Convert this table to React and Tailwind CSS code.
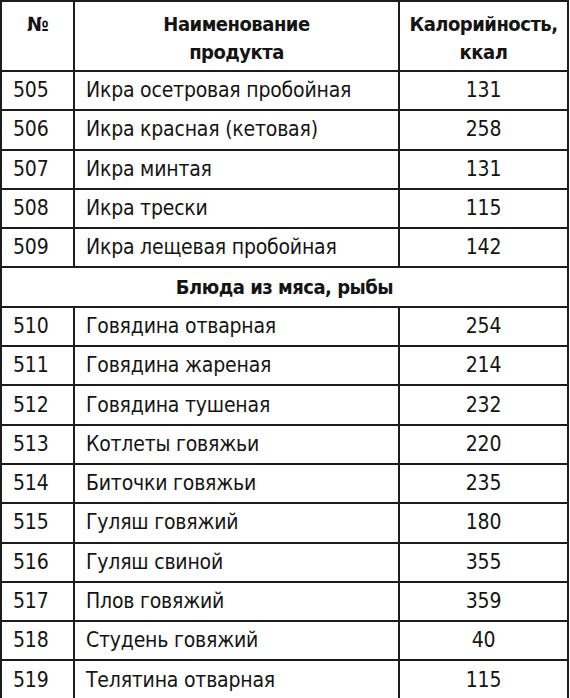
import React from "react";

const rowsTop = [
  ["505", "Икра осетровая пробойная", "131"],
  ["506", "Икра красная (кетовая)", "258"],
  ["507", "Икра минтая", "131"],
  ["508", "Икра трески", "115"],
  ["509", "Икра лещевая пробойная", "142"],
];

const rowsMeat = [
  ["510", "Говядина отварная", "254"],
  ["511", "Говядина жареная", "214"],
  ["512", "Говядина тушеная", "232"],
  ["513", "Котлеты говяжьи", "220"],
  ["514", "Биточки говяжьи", "235"],
  ["515", "Гуляш говяжий", "180"],
  ["516", "Гуляш свиной", "355"],
  ["517", "Плов говяжий", "359"],
  ["518", "Студень говяжий", "40"],
  ["519", "Телятина отварная", "115"],
];

const Row = ({ num, name, kcal }) => (
  <tr className="h-[39.3px]">
    <td className="border-2 border-[#1c1c1c] pl-[11px] align-middle">{num}</td>
    <td className="border-2 border-[#1c1c1c] pl-[11px] align-middle">{name}</td>
    <td className="border-2 border-[#1c1c1c] text-center align-middle">{kcal}</td>
  </tr>
);

export default function App() {
  return (
    <div className="w-[570px] h-[698px] bg-white overflow-hidden">
      <table
        className="w-[569px] border-collapse table-fixed text-[21px] tracking-[-0.2px] leading-none text-[#141414]"
        style={{ fontFamily: '"Liberation Sans Narrow", "DejaVu Sans Condensed", "Liberation Sans", sans-serif' }}
      >
        <colgroup>
          <col className="w-[73px]" />
          <col className="w-[325px]" />
          <col />
        </colgroup>
        <thead>
          <tr className="h-[70px] text-[20px] tracking-[-0.5px]">
            <th className="border-2 border-[#1c1c1c] align-top pt-[8px] font-bold text-center leading-[28px]">№</th>
            <th className="border-2 border-[#1c1c1c] align-top pt-[8px] font-bold text-center leading-[28px]">
              Наименование
              <br />
              продукта
            </th>
            <th className="border-2 border-[#1c1c1c] align-top pt-[8px] font-bold text-center leading-[28px]">
              Калорийность,
              <br />
              ккал
            </th>
          </tr>
        </thead>
        <tbody>
          {rowsTop.map(([n, name, k]) => (
            <Row key={n} num={n} name={name} kcal={k} />
          ))}
          <tr className="h-[39.3px]">
            <td
              colSpan={3}
              className="border-2 border-[#1c1c1c] text-center font-bold align-middle text-[20px] tracking-[-0.5px]"
            >
              Блюда из мяса, рыбы
            </td>
          </tr>
          {rowsMeat.map(([n, name, k]) => (
            <Row key={n} num={n} name={name} kcal={k} />
          ))}
        </tbody>
      </table>
    </div>
  );
}
